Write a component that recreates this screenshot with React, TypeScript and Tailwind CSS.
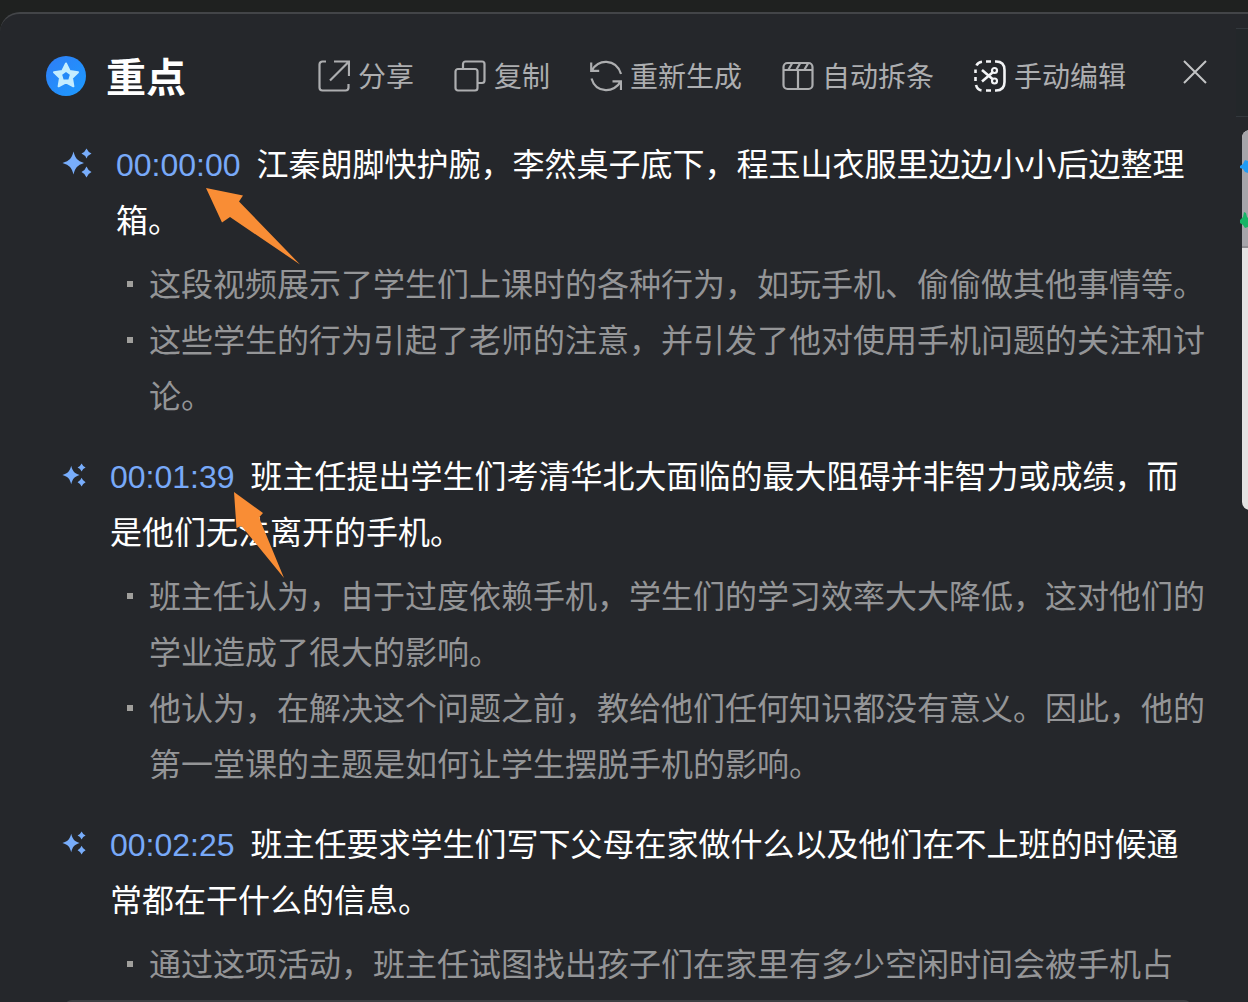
import React from 'react';

type Highlight = {
  time: string;
  title: string;
  points: string[];
};

const highlights: Highlight[] = [
  {
    time: '00:00:00',
    title: '江秦朗脚快护腕，李然桌子底下，程玉山衣服里边边小小后边整理箱。',
    points: [
      '这段视频展示了学生们上课时的各种行为，如玩手机、偷偷做其他事情等。',
      '这些学生的行为引起了老师的注意，并引发了他对使用手机问题的关注和讨论。',
    ],
  },
  {
    time: '00:01:39',
    title: '班主任提出学生们考清华北大面临的最大阻碍并非智力或成绩，而是他们无法离开的手机。',
    points: [
      '班主任认为，由于过度依赖手机，学生们的学习效率大大降低，这对他们的学业造成了很大的影响。',
      '他认为，在解决这个问题之前，教给他们任何知识都没有意义。因此，他的第一堂课的主题是如何让学生摆脱手机的影响。',
    ],
  },
  {
    time: '00:02:25',
    title: '班主任要求学生们写下父母在家做什么以及他们在不上班的时候通常都在干什么的信息。',
    points: ['通过这项活动，班主任试图找出孩子们在家里有多少空闲时间会被手机占'],
  },
];

const StarBadge = () => (
  <svg viewBox="0 0 40 40" className="size-10 shrink-0" aria-hidden="true">
    <defs>
      <linearGradient id="badge" x1="0" y1="0" x2="1" y2="1">
        <stop offset="0" stopColor="#2f7df6" />
        <stop offset="1" stopColor="#1c9bff" />
      </linearGradient>
    </defs>
    <circle cx="20" cy="20" r="20" fill="url(#badge)" />
    <path
      d="M20 7.500l3.700 7.500 8.300 1.200-6 5.800 1.400 8.300-7.400-3.900-7.400 3.900 1.400-8.300-6-5.800 8.300-1.200z"
      fill="#c4edff"
      stroke="#c4edff"
      strokeWidth="2"
      strokeLinejoin="round"
    />
    <path d="M20 16l3.800 2.800-1.400 4.600h-4.800l-1.400-4.600z" fill="#2489f8" />
  </svg>
);

const Sparkle = ({ className }: { className: string }) => (
  <svg viewBox="0 0 30 30" className={className} fill="#78adfb" aria-hidden="true">
    <path d="M11.500 3.500C13.500 10.500 15 12.500 22 15C15 17.500 13.500 19.500 11.500 26.500C9.500 19.500 8 17.500 0.500 15C8 12.500 9.500 10.500 11.500 3.500Z" />
    <path d="M24.500 0.500Q26 4 29.500 5.500Q26 7 24.500 10.500Q23 7 19.500 5.500Q23 4 24.500 0.500Z" />
    <path d="M24.500 18.500Q26 22.500 29.500 24Q26 25.500 24.500 29.500Q23 25.500 19.500 24Q23 22.500 24.500 18.500Z" />
  </svg>
);

const ToolIcon = ({ children, className = '' }: { children: React.ReactNode; className?: string }) => (
  <svg
    viewBox="0 0 32 32"
    className={`size-8 shrink-0 ${className}`}
    fill="none"
    stroke="currentColor"
    strokeWidth="2.200"
    aria-hidden="true"
  >
    {children}
  </svg>
);

const tools = [
  {
    label: '分享',
    icon: (
      <ToolIcon>
        <path d="M8 1.500H4.500a3 3 0 0 0-3 3v23a3 3 0 0 0 3 3h23a3 3 0 0 0 3-3V24" />
        <path d="M16 1.500h15V16M31 1.500L12 20.500" />
      </ToolIcon>
    ),
  },
  {
    label: '复制',
    icon: (
      <ToolIcon>
        <rect x="1.500" y="9" width="22" height="21.500" rx="2.500" />
        <path d="M9 9V4a2.500 2.500 0 0 1 2.500-2.500H28A2.500 2.500 0 0 1 30.500 4v16.500A2.500 2.500 0 0 1 28 23h-4.500" />
      </ToolIcon>
    ),
  },
  {
    label: '重新生成',
    icon: (
      <ToolIcon>
        <path d="M2 10.500C7 -1 26 -2 31 14M1.200 2.500v8.300h8" />
        <path d="M30.500 21.500C25 33 6 34 1.500 18.500M31 30v-8.600h-8.500" />
      </ToolIcon>
    ),
  },
  {
    label: '自动拆条',
    icon: (
      <ToolIcon>
        <rect x="1.500" y="3" width="29" height="26" rx="4" />
        <path d="M1.500 10h29M16 10v19" />
        <path d="M10 3.500L6.500 9.500M18 3.500L14.500 9.500M26 3.500L22.500 9.500" />
      </ToolIcon>
    ),
  },
  {
    label: '手动编辑',
    icon: (
      <ToolIcon className="text-gray-100">
        <path
          d="M21 1.500h1c6 0 8.500 3 8.500 8.500v12c0 5.500-2.500 8.500-8.500 8.500h-1M17 1.500h-5M8 1.700C5.500 2 3.500 3 2.500 5.500M1.500 9.500v3.500M1.500 17v4M2 25c.8 3 2.500 5 5.500 5.400M12 30.500h5"
          strokeWidth="2.600"
        />
        <path d="M8 10l10.500 9M8 21.500l10.500-9" strokeWidth="2.600" />
        <circle cx="20.500" cy="10.500" r="2.500" />
        <circle cx="20.500" cy="21" r="2.500" />
      </ToolIcon>
    ),
  },
];

const HighlightItem = ({ item, large }: { item: Highlight; large: boolean }) => (
  <article>
    <div className="flex gap-6 pl-[62px]">
      <div className="flex h-14 shrink-0 items-center pb-1">
        <Sparkle className={large ? 'size-[30px]' : 'size-6'} />
      </div>
      <h2 className="min-w-0 text-white">
        <a href={`#t=${item.time}`} className="mr-4 text-[#78a9f8]">{item.time}</a>
        {item.title}
      </h2>
    </div>
    <ul className="mt-2 pl-[127px] text-[#949597]">
      {item.points.map((point) => (
        <li key={point} className="flex gap-4">
          <span className="mt-6 size-[6px] shrink-0 bg-[#a09f9c]" />
          <p>{point}</p>
        </li>
      ))}
    </ul>
  </article>
);

// Windows peeking out from behind the right edge of the panel
const DesktopEdge = () => (
  <div className="absolute inset-y-0 right-0 w-3 overflow-hidden" aria-hidden="true">
    <div className="absolute top-7 right-0 h-[89px] w-3 border-y border-[#33383d] bg-[#23272a]" />
    <div className="absolute top-[130px] -right-3 h-[380px] w-[18px] overflow-hidden rounded-lg bg-[#e4e2e2]">
      <div className="h-[118px] border-b-2 border-[#8e8d91] bg-[#a6a5aa]" />
    </div>
    <svg viewBox="0 0 8 80" className="absolute top-[150px] right-0 h-20 w-2">
      <path d="M0 16l3-2 2-4 3 1v12l-3-1-2-3-3-1z" fill="#1e9bf5" />
      <path d="M0 70l3-3 1-5 2 1 1 4 1 1v9l-3 1-2-3-3-2z" fill="#17b566" />
    </svg>
  </div>
);

const Arrows = () => (
  <svg
    width="320"
    height="600"
    viewBox="0 0 320 600"
    className="pointer-events-none absolute top-0 left-0"
    fill="#f98d35"
    aria-hidden="true"
  >
    <path d="M206 188L243 195.500L239 201.500L300 264.500L230 217L222 222.500Z" />
    <path d="M234 492L263 513L259 517.500L284 578L241.500 526L236.500 528Z" />
  </svg>
);

export default function App() {
  return (
    <div className="relative h-screen overflow-hidden bg-[#1f2120] pt-3 font-['Liberation_Sans','Noto_Sans_CJK_SC',sans-serif]">
      <main className="min-h-full rounded-tl-[20px] border-t-2 border-[#434548] bg-[#25272b]">
        <header className="flex h-[123px] items-center pt-px pr-10 pl-[46px]">
          <div className="flex items-center gap-5">
            <StarBadge />
            <h1 className="pt-1 text-[40px] leading-10 font-bold text-white">重点</h1>
          </div>
          <div className="ml-auto flex items-center gap-10 text-[28px] leading-8 text-[#adaeb0]">
            {tools.map((tool) => (
              <button key={tool.label} type="button" className="flex items-center gap-2 whitespace-nowrap">
                {tool.icon}
                <span className="-mb-1">{tool.label}</span>
              </button>
            ))}
            <button type="button" aria-label="关闭" className="mb-2 ml-4">
              <svg viewBox="0 0 26 26" className="size-[26px]" stroke="#c3c4c5" strokeWidth="2" aria-hidden="true">
                <path d="M2 2l22 22M24 2L2 24" />
              </svg>
            </button>
          </div>
        </header>

        <section className="flex flex-col gap-6 pr-10 text-[32px] leading-14">
          {highlights.map((item, index) => (
            <HighlightItem key={item.time} item={item} large={index === 0} />
          ))}
        </section>

        <div className="mt-[7px] mr-14 ml-16 h-3 rounded-t-lg bg-[#3c3e42]" />
      </main>

      <DesktopEdge />
      <Arrows />
    </div>
  );
}
